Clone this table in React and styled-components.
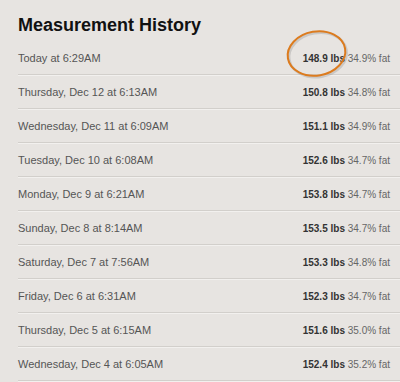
import React from 'react'
import styled, { createGlobalStyle } from 'styled-components'

const GlobalStyle = createGlobalStyle`
	html, body {
		margin: 0;
		padding: 0;
		background: #e7e4e1;
	}
	body {
		font-family: "Liberation Sans", Arial, sans-serif;
	}
`

const Page = styled.div`
	width: 400px;
	height: 382px;
	overflow: hidden;
	padding-left: 18px;
	box-sizing: border-box;
	background: #e7e4e1;
`

const Title = styled.h2`
	margin: 0;
	padding-top: 12px;
	height: 30px;
	font-size: 18px;
	font-weight: bold;
	color: #111;
	line-height: 26px;
`

const List = styled.ul`
	list-style: none;
	margin: 0;
	padding: 0;
`

const Row = styled.li`
	display: flex;
	align-items: center;
	justify-content: space-between;
	height: 32px;
	padding-right: 10px;
	border-bottom: 1px solid #d2cfcb;
	box-shadow: 0 1px 0 #f2f0ee;
	margin-bottom: 1px;
`

const When = styled.span`
	font-size: 11px;
	color: #555;
`

const Stats = styled.span`
	position: relative;
	font-size: 10px;
	color: #666;
	> b {
		color: #333;
	}
`

const Circle = styled.svg`
	position: absolute;
	left: -17px;
	top: -23px;
	pointer-events: none;
	overflow: visible;
`

const entries = [
	['Today at 6:29AM', '148.9', '34.9'],
	['Thursday, Dec 12 at 6:13AM', '150.8', '34.8'],
	['Wednesday, Dec 11 at 6:09AM', '151.1', '34.9'],
	['Tuesday, Dec 10 at 6:08AM', '152.6', '34.7'],
	['Monday, Dec 9 at 6:21AM', '153.8', '34.7'],
	['Sunday, Dec 8 at 8:14AM', '153.5', '34.7'],
	['Saturday, Dec 7 at 7:56AM', '153.3', '34.8'],
	['Friday, Dec 6 at 6:31AM', '152.3', '34.7'],
	['Thursday, Dec 5 at 6:15AM', '151.6', '35.0'],
	['Wednesday, Dec 4 at 6:05AM', '152.4', '35.2'],
]

const App = () => (
	<Page>
		<GlobalStyle />
		<Title>Measurement History</Title>
		<List>
			{entries.map(([when, lbs, fat], i) => (
				<Row key={when}>
					<When>{when}</When>
					<Stats>
						<b>{lbs} lbs</b> {fat}% fat
						{i === 0 && (
							<Circle width="62" height="48">
								<ellipse cx="32" cy="25" rx="29" ry="22" fill="none" stroke="#888" strokeOpacity="0.3" strokeWidth="2.5" transform="rotate(-10 32 25)" />
								<ellipse cx="30.5" cy="23.5" rx="29" ry="22" fill="none" stroke="#dc7b1e" strokeWidth="2" transform="rotate(-10 30.5 23.5)" />
							</Circle>
						)}
					</Stats>
				</Row>
			))}
		</List>
	</Page>
)

export default App
